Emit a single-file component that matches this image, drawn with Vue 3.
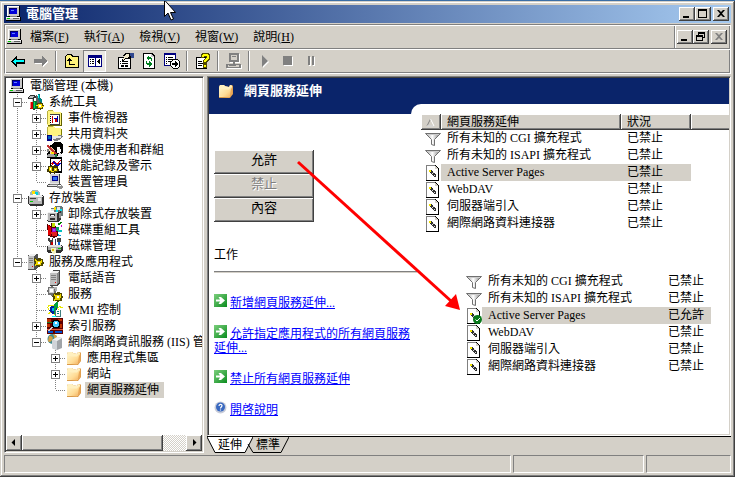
<template>
  <div class="window">
    <header class="titlebar">
      <svg class="icon"><use href="#i-computer" /></svg>
      <h1>電腦管理</h1>
      <div class="controls">
        <button class="ctl" aria-label="最小化"><svg viewBox="0 0 12 10"><path d="M2 7h6v2H2z" /></svg></button>
        <button class="ctl" aria-label="最大化"><svg viewBox="0 0 12 10"><path d="M1 0h9v9H1zM2 2v6h7V2z" fill-rule="evenodd" /></svg></button>
        <button class="ctl close" aria-label="關閉"><svg viewBox="0 0 12 10"><path d="M2 1h2l2 2 2-2h2L7 4.500l3 3.500H8L6 6 4 8H2l3-3.500z" /></svg></button>
      </div>
    </header>

    <div class="bars">
      <nav class="menubar">
        <svg class="icon"><use href="#i-computer" /></svg>
        <button v-for="m in menus" :key="m.key" class="menu">{{ m.text }}(<u>{{ m.key }}</u>)</button>
        <div class="controls child">
          <button class="ctl" aria-label="最小化"><svg viewBox="0 0 12 10"><path d="M2 7h6v2H2z" /></svg></button>
          <button class="ctl" aria-label="還原"><svg viewBox="0 0 12 10"><path d="M3 0h7v6H8V5h1V2H4v1H3zM1 3h7v6H1zM2 5v3h5V5z" fill-rule="evenodd" /></svg></button>
          <button class="ctl close" aria-label="關閉" disabled><svg viewBox="0 0 12 10"><path d="M2 1h2l2 2 2-2h2L7 4.500l3 3.500H8L6 6 4 8H2l3-3.500z" /></svg></button>
        </div>
      </nav>
      <div class="toolbar">
        <template v-for="(t, i) in tools" :key="i">
          <span v-if="!t.icon" class="sep" :class="{ blank: t.blank }"></span>
          <button v-else class="tool" :class="{ pressed: t.pressed }" :aria-label="t.label">
            <svg class="icon"><use :href="'#i-' + t.icon" /></svg>
          </button>
        </template>
      </div>
    </div>

    <main class="main">
      <aside class="tree-pane">
        <ul class="tree">
          <li v-for="n in nodes" :key="n.label" class="node">
            <span v-for="(g, i) in n.guides" :key="i" class="cell">
              <svg class="guide" viewBox="0 0 19 16">
                <path v-if="g === '|' || g === '+'" d="M8.500 0v16" />
                <path v-if="g === 'L'" d="M8.500 0v8" />
                <path v-if="g === '+' || g === 'L'" d="M9 8.500h10" />
              </svg>
              <button v-if="n.box && i === n.guides.length - 1" class="box" :aria-label="n.box === '+' ? '展開' : '摺疊'">
                <svg viewBox="0 0 9 9">
                  <path d="M2 4h5v1H2z" />
                  <path v-if="n.box === '+'" d="M4 2h1v5H4z" />
                </svg>
              </button>
            </span>
            <svg class="icon"><use :href="'#i-' + n.icon" /></svg>
            <span class="label" :class="{ selected: n.selected }">{{ n.label }}</span>
          </li>
        </ul>
        <div class="scrollbar">
          <button class="scroll-btn" aria-label="向左捲動"><svg viewBox="0 0 8 8"><path d="M5 0v7L1.500 3.500z" /></svg></button>
          <div class="track"><div class="thumb"></div></div>
          <button class="scroll-btn" aria-label="向右捲動"><svg viewBox="0 0 8 8"><path d="M3 0v7l3.500-3.500z" /></svg></button>
        </div>
      </aside>

      <section class="detail">
        <div class="view">
          <div class="banner">
            <div class="banner-title">
              <svg class="icon"><use href="#i-folder" /></svg>
              <h2>網頁服務延伸</h2>
            </div>
            <div class="notch"></div>
          </div>
          <div class="body">
            <div class="side">
              <div class="actions">
                <button>允許</button>
                <button disabled>禁止</button>
                <button>內容</button>
              </div>
              <h3>工作</h3>
              <hr />
              <div class="tasks">
                <p v-for="t in tasks" :key="t.text">
                  <svg class="task-icon" viewBox="0 0 13 13"><use :href="'#i-' + t.icon" /></svg><a href="#">{{ t.text }}</a>
                </p>
              </div>
            </div>

            <div class="lists">
              <table class="list">
                <colgroup><col class="c-icon" /><col class="c-name" /><col class="c-state" /><col /></colgroup>
                <thead>
                  <tr>
                    <th class="sort"><svg viewBox="0 0 9 9"><path d="M4.500 1 1 8h7" stroke="#808080" /><path d="M4.500 1 8 8H1" stroke="#fff" /></svg></th>
                    <th>網頁服務延伸</th>
                    <th>狀況</th>
                    <th class="filler"></th>
                  </tr>
                </thead>
                <tbody>
                  <tr v-for="r in before" :key="r.name" :class="{ selected: r.selected }">
                    <td class="pic"><svg class="icon"><use :href="'#i-' + r.icon" /></svg></td>
                    <td>{{ r.name }}</td>
                    <td>{{ r.state }}</td>
                    <td class="rest"></td>
                  </tr>
                </tbody>
              </table>

              <table class="list after">
                <colgroup><col class="c-icon" /><col class="c-name" /><col class="c-state" /></colgroup>
                <tbody>
                  <tr v-for="r in after" :key="r.name" :class="{ selected: r.selected }">
                    <td class="pic"><svg class="icon"><use :href="'#i-' + r.icon" /></svg></td>
                    <td>{{ r.name }}</td>
                    <td>{{ r.state }}</td>
                  </tr>
                </tbody>
              </table>
            </div>

            <svg class="arrow" viewBox="0 0 170 160">
              <path d="M4 8 157 147" stroke="#f00" stroke-width="3" />
              <path d="m166 156-15-4 11-12z" fill="#f00" />
            </svg>
          </div>
        </div>
        <div class="tabs">
          <button class="tab active">
            <svg viewBox="0 0 46 16"><path d="M0 0h46l-8 15H8z" fill="#fff" /><path d="M0 0l8 15.500h30L46 0" fill="none" stroke="#000" /></svg>
            <span>延伸</span>
          </button>
          <button class="tab">
            <svg viewBox="0 0 42 16"><path d="M1 7l5 8.500h28L42 0" fill="none" stroke="#000" /></svg>
            <span>標準</span>
          </button>
        </div>
      </section>
    </main>

    <footer class="status"><span></span><span></span><span></span></footer>

    <svg class="cursor" viewBox="0 0 13 20">
      <path d="M.500-1v16.500l3.500-3.500 3 7 2.500-1-3-6.500h5z" fill="#fff" stroke="#000" />
    </svg>

    <svg class="defs" aria-hidden="true">
      <linearGradient id="g-folder" x1="0" y1="0" x2="1" y2="1">
        <stop offset="0" stop-color="#fff6cc" /><stop offset=".6" stop-color="#ffdc96" /><stop offset="1" stop-color="#f2b060" />
      </linearGradient>
      <linearGradient id="g-funnel">
        <stop offset="0" stop-color="#999" /><stop offset=".45" stop-color="#fff" /><stop offset="1" stop-color="#777" />
      </linearGradient>
      <linearGradient id="g-go" x1="0" y1="0" x2="1" y2="1">
        <stop offset="0" stop-color="#7ccf7c" /><stop offset="1" stop-color="#0a8c1e" />
      </linearGradient>

      <symbol id="i-computer" viewBox="0 0 16 16" shape-rendering="crispEdges">
        <path d="M2 0h12v11H2zM0 11h15v4H0z" fill="#000" />
        <path d="M1 0h12v10H1zM0 11h14v3H0z" fill="#c8c8c8" />
        <path d="M1 0h12v1H2v9H1zM0 11h14v1H0z" fill="#fff" /><path d="M4 10h7v1H4z" fill="#808080" />
        <path d="M3 2h8v6H3z" fill="#0000d8" /><path d="M3 2h8v1H4v5H3z" fill="#000060" />
        <path d="M5 4h3v1H5z" fill="#6080ff" /><path d="M1 12h3v1H1z" fill="#0c0" /><path d="M7 12h6v1H7z" fill="#606060" />
      </symbol>
      <symbol id="i-tools" viewBox="0 0 16 16" shape-rendering="crispEdges">
        <path d="M0 3l2-2h4l2 1v2H6v1l1 3v8H5V7L3 5H0z" fill="#303030" /><path d="M1 3l2-1h3v1L4 4H1zM4 5h1v4H4z" fill="#c0c0c0" />
        <path d="M8 1h1l2 3 1 5H9L8 5z" fill="#606060" /><path d="M10 0h2v4l2 2v3h-2l-2-4z" fill="#008080" /><path d="M10 1h1v3h-1z" fill="#0ff" />
        <path d="M2 8h3v7H2z" fill="#d00000" /><path d="M2 8h1v6H2z" fill="#f88" /><path d="M5 7h4v8H5z" fill="#008030" /><path d="M6 8h1v6H6z" fill="#0d6" />
        <path d="M9 9h2l1-1 1 1h2v2l1 1-1 1v2h-2l-1 1-1-1H9v-2l-1-1 1-1z" fill="#504800" /><path d="M10 10h4v4h-4zM8 11h2v1H8zM14 12h2v1h-2z" fill="#ffe000" /><path d="M11 11h2v2h-2z" fill="#fff" />
      </symbol>
      <symbol id="i-event" viewBox="0 0 16 16" shape-rendering="crispEdges">
        <path d="M1 1h6l1 2h7v13H1z" fill="#606000" /><path d="M0 1l1-1h5l1 2h7v13H0z" fill="#fff480" />
        <path d="M1 0h5v1H1v13H0V1z" fill="#b8b040" /><path d="M3 5h10v9H3z" fill="#fff" /><path d="M3 4h10v1H3zM12 5h1v9h-1zM3 14h10v1H3z" fill="#404040" />
        <path d="M3 6h1v1H3zM3 8h1v1H3zM3 10h1v1H3zM3 12h1v1H3z" fill="#000" /><path d="M5 6h1v7H5zM8 9h2v3H8z" fill="#d00000" /><path d="M7 8h4v1H7zM10 6h1v6h-1z" fill="#00a" />
      </symbol>
      <symbol id="i-share" viewBox="0 0 16 16" shape-rendering="crispEdges">
        <path d="M1 1h6l2 2h6v9H1z" fill="#808000" /><path d="M0 1l1-1h5l2 2h6v9H0z" fill="#fff480" /><path d="M1 0h5v1H1v9H0V1z" fill="#b8b040" />
        <path d="M0 9h5v6H0z" fill="#000080" /><path d="M1 10h3v3H1z" fill="#0060c0" /><path d="M5 10h5l1-1h4l1 2-4 3-2 1H8l-3-2z" fill="#808080" /><path d="M5 10h9v2H9v1H5z" fill="#e8e8e8" />
      </symbol>
      <symbol id="i-users" viewBox="0 0 16 16" shape-rendering="crispEdges">
        <path d="M6 1l2-1h5l3 3v8l-2 1 1 4H0v-5l2-2V4l4-2z" fill="#000" /><path d="M10 5h3l1 4-2 2h-2z" fill="#fff" />
        <path d="M2 5h3l3 4-2 3H3z" fill="#f0d8a8" /><path d="M0 3h2l8 9-1 2L1 6z" fill="#c03030" /><path d="M1 12h5l3 3H0z" fill="#a0a0a0" />
        <path d="M12 11h2l1 4h-5z" fill="#e8e8e8" /><path d="M4 10h3v2H4z" fill="#ffe000" /><path d="M0 7h2v3H0z" fill="#808080" /><path d="M8 12h2v3H8z" fill="#208040" />
      </symbol>
      <symbol id="i-perf" viewBox="0 0 16 16" shape-rendering="crispEdges">
        <path d="M3 0h12v15H3z" fill="#000" /><path d="M4 1h10v12H4z" fill="#fff" /><path d="M4 5h1l2-3 3 4 3-4h1l-4 6-3-3-2 2z" fill="#d00000" />
        <path d="M6 3h1l3 4 3-2h1l-4 4-4-4z" fill="#0000d0" /><path d="M1 8h2l1-1 2 1 2-1 1 1h2v2l1 2-1 2h-2l-1 2-3-1-2 1-1-2H0v-3l1-1z" fill="#403800" />
        <path d="M2 9h3v4H2zM7 10h3v3H7zM4 13h3v1H4z" fill="#f0d800" /><path d="M3 10h1v2H3zM8 11h1v1H8z" fill="#fff" />
      </symbol>
      <symbol id="i-device" viewBox="0 0 16 16" shape-rendering="crispEdges">
        <path d="M4 0h9v10H4z" fill="#404040" /><path d="M3 0h9v9H3z" fill="#d0d0d0" /><path d="M5 2h6v5H5z" fill="#000090" /><path d="M6 3h4v3H6z" fill="#3070f0" />
        <path d="M2 9h11l2 3v1H0v-1z" fill="#505050" /><path d="M2 9h10v1H2zM1 11h12v1H1z" fill="#e8e8e8" /><path d="M3 10h8v1H3z" fill="#808080" /><path d="M10 11h4l2 1v2l-2 1-4-1z" fill="#909090" /><path d="M11 11h3v1h-3z" fill="#fff" />
      </symbol>
      <symbol id="i-storage" viewBox="0 0 16 16" shape-rendering="crispEdges">
        <path d="M3 1l2-1h4l3 3v3H2V3z" fill="#a0b8b8" /><path d="M4 1h3v3H4z" fill="#ffe000" /><path d="M7 2h3v3H7z" fill="#00d0e0" /><path d="M5 4h3v1H5z" fill="#fff" />
        <path d="M1 5h13l2 2v7l-1 2H2l-2-2V6z" fill="#303030" /><path d="M1 5h12l2 2H1z" fill="#f0f0f0" /><path d="M1 7h13v7H1z" fill="#b8b8b8" /><path d="M2 8h6v1H2z" fill="#404040" /><path d="M10 8h3v3h-3z" fill="#e8e8e8" /><path d="M2 11h3v1H2z" fill="#0c0" />
      </symbol>
      <symbol id="i-removable" viewBox="0 0 16 16" shape-rendering="crispEdges">
        <path d="M3 2h3l2-2h6l2 2v8h-4z" fill="#687878" /><path d="M7 1h2v3H7z" fill="#ffe000" /><path d="M9 3h2v3H9zM13 3h2v2h-2z" fill="#00e0f0" /><path d="M10 1h3v3h-3zM4 3h3v2H4z" fill="#e0e8e8" />
        <path d="M1 6h10l3-1v8l-3 3H1l-1-1V7z" fill="#303030" /><path d="M1 6h10v1H1v7H0V7z" fill="#f0f0f0" /><path d="M1 7h9v8H1z" fill="#b8b8b8" /><path d="M3 8h5v2H3zM3 12h5v2H3z" fill="#303030" /><path d="M4 9h3v1H4z" fill="#fff" /><path d="M12 7h2v5h-2z" fill="#909090" />
      </symbol>
      <symbol id="i-defrag" viewBox="0 0 16 16" shape-rendering="crispEdges">
        <path d="M0 2l4 2V1h4v3l3 2v8l-4 2-6-2z" fill="#500000" /><path d="M1 3l3 2v9l-3-1z" fill="#e00000" /><path d="M5 1h3v4H5z" fill="#c0e000" />
        <path d="M5 6h4v4H5z" fill="#b000c0" /><path d="M4 10h6v4H5z" fill="#e02020" /><path d="M9 5h3v4H9z" fill="#00a060" /><path d="M11 1l4-1-3 4z" fill="#008000" /><path d="M13 4l2-2v3z" fill="#c0c" />
        <path d="M11 8h4v2h-4z" fill="#00c0c0" /><path d="M6 7h2v2H6z" fill="#8060ff" /><path d="M11 12l4 2h-4z" fill="#00a0e0" />
      </symbol>
      <symbol id="i-disk" viewBox="0 0 16 16" shape-rendering="crispEdges">
        <path d="M1 0h2v2h2V0h1v4L4 5v3H3V4L1 3zM10 0h4v4h-1v4h-2V4h-1z" fill="#404040" /><path d="M4 4h2v4H4z" fill="#c00000" /><path d="M11 4h2v4h-2z" fill="#0060d0" /><path d="M8 1h1v6H8z" fill="#303060" />
        <path d="M1 7h13l2 2v4l-3 2H1l-1-2V8z" fill="#303030" /><path d="M1 7h12l2 2H1z" fill="#e0e0e0" /><path d="M1 9h13v3H1z" fill="#a8a8a8" /><path d="M11 10h3v1h-3z" fill="#0c0" /><path d="M4 10h5v5l-3 1-2-3z" fill="#f0f0c0" /><path d="M5 11h2v2H5z" fill="#e0c000" />
      </symbol>
      <symbol id="i-apps" viewBox="0 0 16 16" shape-rendering="crispEdges">
        <path d="M0 1l3-1h6l1 1v13l-3 2H0z" fill="#505050" /><path d="M0 2h6v13H0z" fill="#c0c0c0" /><path d="M0 2l3-2h6L6 2z" fill="#f0f0f0" /><path d="M1 4h4v1H1zM1 6h4v1H1zM1 8h4v1H1z" fill="#808080" /><path d="M4 12h1v1H4z" fill="#d00" />
        <path d="M6 4l3 1 1-1h2l1 1h2v2l1 2-1 3h-2l-2 1-2-1H7l-1-1 1-2-1-2z" fill="#504800" /><path d="M7 5l2 2h3l2-1v2l-1 3H9l-2 1 1-3z" fill="#f0d800" /><path d="M10 8h2v2h-2z" fill="#fff" />
      </symbol>
      <symbol id="i-phone" viewBox="0 0 16 16" shape-rendering="crispEdges">
        <path d="M3 3l3-3h7v13l-3 3H3z" fill="#404040" /><path d="M3 3h7v12H3z" fill="#c0c0c0" /><path d="M3 3l3-2h6l-2 2z" fill="#f0f0f0" /><path d="M10 3l2-2v11l-2 3z" fill="#888" />
        <path d="M4 5h5v1H4zM4 7h5v1H4zM4 9h5v1H4z" fill="#808080" /><path d="M8 12h1v1H8z" fill="#e00" />
      </symbol>
      <symbol id="i-gears" viewBox="0 0 16 16" shape-rendering="crispEdges">
        <path d="M1 1h2l1-1h2v1h2v2l1 1v2L8 7v2H6l-1 1-2-1H1V7L0 5l1-2z" fill="#707070" /><path d="M2 2h5v5H2z" fill="#d0d0d0" /><path d="M3 3h3v3H3z" fill="#fff" /><path d="M7 1h3v4H8z" fill="#b0b0b0" />
        <path d="M7 7h2l1-1h3v1h2v2l1 2-1 2v2h-2l-2 1-2-1H6v-3l-1-1 1-2z" fill="#504800" /><path d="M7 8l2 1h3l2-1v2l-1 4h-4l-2 1 1-3z" fill="#f0d800" /><path d="M10 10h2v2h-2z" fill="#fff" />
      </symbol>
      <symbol id="i-wmi" viewBox="0 0 16 16" shape-rendering="crispEdges">
        <ellipse cx="7" cy="8" rx="7" ry="3.500" fill="none" stroke="#e8e800" transform="rotate(35 7 8)" /><path d="M14 4L1 12M2 3h4M13 5h3" fill="none" stroke="#e8e800" />
        <path d="M4 4h4l2 3-1 5H5L2 9z" fill="#0020a0" /><path d="M5 6h2v3H5z" fill="#00b0f0" /><path d="M7 2l3-2h1v6H9v6H7z" fill="#00a040" />
        <path d="M8 8h6v7H8z" fill="#408080" /><path d="M9 8h4v6H9z" fill="#fff" /><path d="M10 9h2v1h-2zM10 11h2v1h-2z" fill="#008080" /><path d="M5 14h4v1H5z" fill="#0ff" />
      </symbol>
      <symbol id="i-index" viewBox="0 0 16 16" shape-rendering="crispEdges">
        <path d="M0 0h16v16H0z" fill="#600000" /><path d="M0 1h4v3H0zM0 6h3v3H0zM11 1h4v2h-4zM13 6h2v4h-2z" fill="#c03000" /><path d="M0 4h5v1H0z" fill="#208020" /><path d="M0 11h16v1H0z" fill="#e06040" /><path d="M1 13h5v2H1zM8 13h7v2H8z" fill="#0050d0" />
        <path d="M6 2h6v1h1v6h-1v1H6V9H5V3h1z" fill="#000" /><path d="M7 3h4v1h1v4h-1v1H7V8H6V4h1z" fill="#40c8ff" /><path d="M8 4h2v2H8z" fill="#fff" /><path d="M4 9h2v1L2 13H0z" fill="#d0d0d0" />
      </symbol>
      <symbol id="i-iis" viewBox="0 0 16 16">
        <circle cx="5.500" cy="5" r="5" fill="#408c90" /><path d="M2 2c3 0 5 1 3 4S2 8 1 7zM6 0l4 2-2 4z" fill="#d8a040" />
        <path d="M5 6l5-3 5 1v10l-5 2-5-2z" fill="#a0a4a8" /><path d="M5 6l5 1v9l-5-2z" fill="#d0d4d8" /><path d="M5 6l5-3 5 1-5 3z" fill="#f0f2f2" />
      </symbol>
      <symbol id="i-folder" viewBox="0 0 16 16">
        <path d="M1 4l1-2h4l1 1 4 1 1-2h2l1 1v8l-3 4H1z" fill="#d89848" /><path d="M1 4l1-2h4l1 1 4 1 1-2 2 .500v8L11.500 14H1z" fill="#fff0c0" />
        <path d="M1 5l5 1.500h5L13 4v7l-2 3.500L1 13.500z" fill="url(#g-folder)" /><path d="M14.500 3v8l-3 3.500L13 6z" fill="#eaa858" />
      </symbol>
      <symbol id="i-funnel" viewBox="0 0 16 16">
        <path d="M.500 2.500h15l-6 6v6l-3-1v-5z" fill="url(#g-funnel)" stroke="#707070" /><path d="M2 3.500h12" stroke="#ccc" />
      </symbol>
      <symbol id="i-ext" viewBox="0 0 16 16" shape-rendering="crispEdges">
        <path d="M1 0h9l4 4v12H1z" fill="#000" /><path d="M1 0h9l3 4v11H1z" fill="#808080" /><path d="M2 1h8v3h3v11H2z" fill="#fff" /><path d="M10 1l3 3h-3z" fill="#d4d0c8" />
        <path d="M4 5h2l5 5v2H9L4 7z" fill="#303030" /><path d="M4 5h2v1H5v1H4z" fill="#f0e000" /><path d="M5 6h1v1H5z" fill="#ff0" /><path d="M7 8h1v1H7zM8 7h1v1H8zM9 10h1v1H9z" fill="#ddd" />
      </symbol>
      <symbol id="i-ext-ok" viewBox="0 0 16 16">
        <use href="#i-ext" width="16" height="16" /><circle cx="11.500" cy="11.500" r="4.500" fill="#0a7a1c" /><path d="M9.500 11.500l1.500 1.500 3-3" fill="none" stroke="#fff" />
      </symbol>
      <symbol id="i-go" viewBox="0 0 13 13">
        <path d="M0 0h13v13H0z" fill="url(#g-go)" /><path d="M2 5.500h4L4.500 3h2.500l4 3.500-4 3.500H4.500L6 7.500H2z" fill="#fff" />
      </symbol>
      <symbol id="i-help" viewBox="0 0 13 13">
        <circle cx="6.500" cy="6.500" r="6" fill="#c8ccd8" /><circle cx="6.500" cy="6" r="4.500" fill="#3868c0" />
        <path d="M5 5c0-2 3-2 3-.500S6.500 6 6.500 7.500M6.500 8.500v1" fill="none" stroke="#fff" stroke-width="1.200" />
      </symbol>

      <symbol id="i-back" viewBox="0 0 16 16" shape-rendering="crispEdges">
        <path d="M6 3h1v3h8v5H7v3H6L1 9V8z" fill="#000" /><path d="M6 5v2h8v2H6v3L2.500 8.500z" fill="#0ff" />
      </symbol>
      <symbol id="i-forward" viewBox="0 0 16 16" shape-rendering="crispEdges">
        <path d="M10 4l5 5-5 5v-3H2V7h8z" fill="#fff" /><path d="M9 3l5 5-5 5v-3H1V6h8z" fill="#808080" />
      </symbol>
      <symbol id="i-up" viewBox="0 0 16 16" shape-rendering="crispEdges">
        <path d="M1 3l2-2h4l2 2h6v12H1z" fill="#000" /><path d="M2 4l1-2h4l1 2h6v10H2z" fill="#fff27a" /><path d="M5 5l3 3H6v3h5v1H5V8H2z" fill="#000" />
      </symbol>
      <symbol id="i-panes" viewBox="0 0 16 16" shape-rendering="crispEdges">
        <path d="M1 2h14v12H1z" fill="#000080" /><path d="M2 5h6v8H2zM9 5h5v8H9z" fill="#fff" /><path d="M3 6h1v1H3zM5 6h2v1H5zM3 8h1v1H3zM5 8h2v1H5zM3 10h1v1H3zM5 10h2v1H5zM13 6v5l-3-2.500z" fill="#000" />
      </symbol>
      <symbol id="i-props" viewBox="0 0 16 16" shape-rendering="crispEdges">
        <path d="M0 4h13v12H0z" fill="#000" /><path d="M1 5h11v10H1z" fill="#fff" /><path d="M2 8h1v1H2zM4 8h6v1H4zM2 10h1v1H2zM4 10h6v1H4zM3 12h3v2H3zM7 12h3v2H7z" fill="#000" />
        <path d="M5 2l3-2h4l1 1v4l-1 1H8L5 8 3 7l3-3z" fill="#000" /><path d="M6 3l2-2h3v3L8 5 5 7z" fill="#f0e8c8" /><path d="M12 0h4v5h-3z" fill="#304890" />
      </symbol>
      <symbol id="i-refresh" viewBox="0 0 16 16" shape-rendering="crispEdges">
        <path d="M2 0h9l3 3v13H2z" fill="#000" /><path d="M3 1h7v3h3v11H3z" fill="#fff" /><path d="M10 1l3 3h-3z" fill="#ccc" />
        <path d="M8 2v2h2v1h1v3h-1V6H8v2L5 5zM8 14v-2H6v-1H5V8h1v2h2V8l3 3z" fill="#008020" />
      </symbol>
      <symbol id="i-export" viewBox="0 0 16 16" shape-rendering="crispEdges">
        <path d="M0 0h12v13H0z" fill="#000080" /><path d="M1 2h10v10H1z" fill="#fff" /><path d="M2 4h1v1H2zM4 4h5v1H4zM2 6h1v1H2zM4 6h5v1H4zM2 8h1v1H2zM4 8h3v1H4zM2 10h1v1H2z" fill="#000" />
        <path d="M9 6h4l3 3v4l-3 3H9l-3-3V9z" fill="#000" /><path d="M9 7h4l2 2v4l-2 2H9l-2-2V9z" fill="#fff" /><path d="M8 10h3V8l4 3-4 3v-2H8z" fill="#000" />
      </symbol>
      <symbol id="i-helpdoc" viewBox="0 0 16 16" shape-rendering="crispEdges">
        <path d="M1 4h11v12H1z" fill="#000" /><path d="M2 5h9v10H2z" fill="#fff" /><path d="M3 8h4v1H3zM3 10h5v1H3zM3 12h4v1H3z" fill="#000" />
        <path d="M6 1l2-1h5l2 2v4l-3 3v2H8V7l3-2V4H9v1H6zM8 11h4v4H8z" fill="#504800" /><path d="M7 2l2-1h3l2 1v3l-3 3v1H9V7l3-2V3H9v1H7zM9 12h2v2H9z" fill="#ff0" />
      </symbol>
      <symbol id="i-net" viewBox="0 0 16 16" shape-rendering="crispEdges">
        <path d="M4 1h10v9H4zM1 12h15v4H1z" fill="#fff" /><path d="M3 0h10v9H3zM5 2v5h6V2zM0 11h7V9h2v2h6v4H0zM2 12v2h11v-2z" fill="#808080" fill-rule="evenodd" />
        <path d="M5 2h6v5H5zM2 12h11v2H2z" fill="#d4d0c8" /><path d="M6 3h4v1H6zM3 12h7v1H3z" fill="#808080" />
      </symbol>
      <symbol id="i-play" viewBox="0 0 16 16"><path d="M6 3v12l6-6z" fill="#fff" /><path d="M5 2v12l6-6z" fill="#808080" /></symbol>
      <symbol id="i-stop" viewBox="0 0 16 16" shape-rendering="crispEdges"><path d="M4 4h9v9H4z" fill="#fff" /><path d="M3 3h9v9H3z" fill="#808080" /></symbol>
      <symbol id="i-pause" viewBox="0 0 16 16" shape-rendering="crispEdges"><path d="M6 4h2v9H6zM10 4h2v9h-2z" fill="#fff" /><path d="M5 3h2v9H5zM9 3h2v9H9z" fill="#808080" /></symbol>
    </svg>
  </div>
</template>

<script setup>
const menus = [
  { text: '檔案', key: 'F' },
  { text: '執行', key: 'A' },
  { text: '檢視', key: 'V' },
  { text: '視窗', key: 'W' },
  { text: '說明', key: 'H' }
];

// entries without an icon are separators
const tools = [
  { icon: 'back', label: '上一步' },
  { icon: 'forward', label: '下一步' },
  {},
  { icon: 'up', label: '上移一層' },
  { icon: 'panes', label: '顯示/隱藏主控台樹', pressed: true },
  { blank: true },
  { icon: 'props', label: '內容' },
  { icon: 'refresh', label: '重新整理' },
  { icon: 'export', label: '匯出清單' },
  {},
  { icon: 'helpdoc', label: '說明' },
  {},
  { icon: 'net', label: '連線' },
  {},
  { icon: 'play', label: '啟動' },
  { icon: 'stop', label: '停止' },
  { icon: 'pause', label: '暫停' }
];

// guides, one char per indent: | passes by, + branch, L last branch, space is empty
const nodes = [
  { guides: '', icon: 'computer', label: '電腦管理 (本機)' },
  { guides: '+', box: '-', icon: 'tools', label: '系統工具' },
  { guides: '|+', box: '+', icon: 'event', label: '事件檢視器' },
  { guides: '|+', box: '+', icon: 'share', label: '共用資料夾' },
  { guides: '|+', box: '+', icon: 'users', label: '本機使用者和群組' },
  { guides: '|+', box: '+', icon: 'perf', label: '效能記錄及警示' },
  { guides: '|L', icon: 'device', label: '裝置管理員' },
  { guides: '+', box: '-', icon: 'storage', label: '存放裝置' },
  { guides: '|+', box: '+', icon: 'removable', label: '卸除式存放裝置' },
  { guides: '|+', icon: 'defrag', label: '磁碟重組工具' },
  { guides: '|L', icon: 'disk', label: '磁碟管理' },
  { guides: 'L', box: '-', icon: 'apps', label: '服務及應用程式' },
  { guides: ' +', box: '+', icon: 'phone', label: '電話語音' },
  { guides: ' +', icon: 'gears', label: '服務' },
  { guides: ' +', icon: 'wmi', label: 'WMI 控制' },
  { guides: ' +', box: '+', icon: 'index', label: '索引服務' },
  { guides: ' L', box: '-', icon: 'iis', label: '網際網路資訊服務 (IIS) 管' },
  { guides: '  +', box: '+', icon: 'folder', label: '應用程式集區' },
  { guides: '  +', box: '+', icon: 'folder', label: '網站' },
  { guides: '  L', icon: 'folder', label: '網頁服務延伸', selected: true }
].map((n) => ({ ...n, guides: n.guides.split('') }));

const tasks = [
  { icon: 'go', text: '新增網頁服務延伸...' },
  { icon: 'go', text: '允許指定應用程式的所有網頁服務延伸...' },
  { icon: 'go', text: '禁止所有網頁服務延伸' },
  { icon: 'help', text: '開啓說明' }
];

const before = [
  { icon: 'funnel', name: '所有未知的 CGI 擴充程式', state: '已禁止' },
  { icon: 'funnel', name: '所有未知的 ISAPI 擴充程式', state: '已禁止' },
  { icon: 'ext', name: 'Active Server Pages', state: '已禁止', selected: true },
  { icon: 'ext', name: 'WebDAV', state: '已禁止' },
  { icon: 'ext', name: '伺服器端引入', state: '已禁止' },
  { icon: 'ext', name: '網際網路資料連接器', state: '已禁止' }
];

const after = before.map((r) => (r.selected ? { ...r, icon: 'ext-ok', state: '已允許' } : r));
</script>

<style>
body {
  margin: 0;
}
</style>

<style scoped>
.window {
  position: relative;
  box-sizing: border-box;
  min-height: 100vh;
  display: flex;
  flex-direction: column;
  padding: 4px;
  overflow: hidden;
  border-top: 1px solid #3a6ea5;
  background: #d4d0c8;
  box-shadow: inset -1px -1px #404040, inset 1px 1px #d4d0c8, inset -2px -2px #808080, inset 2px 2px #fff;
  color: #000;
  font: 12px/16px "Liberation Serif", "Noto Sans CJK TC", serif;
}

button {
  margin: 0;
  padding: 0;
  border: 0;
  background: none;
  color: inherit;
  font: inherit;
}

h1,
h2,
h3 {
  margin: 0;
  font-size: 13px;
}

svg {
  display: block;
  flex: none;
}

.icon {
  width: 16px;
  height: 16px;
}

.defs {
  position: absolute;
  width: 0;
  height: 0;
}

/* title bar and window buttons */
.titlebar {
  display: flex;
  align-items: center;
  gap: 4px;
  height: 18px;
  padding: 0 2px;
  background: linear-gradient(90deg, #0a246a, #a6caf0);
  color: #fff;
}

.controls {
  display: flex;
  margin-left: auto;
}

.ctl {
  width: 16px;
  height: 14px;
  padding: 2px;
}

.ctl svg {
  width: 12px;
  height: 10px;
}

.ctl.close {
  margin-left: 2px;
}

.ctl:disabled {
  fill: #808080;
}

.ctl,
.scroll-btn,
.thumb,
.actions button {
  background: #d4d0c8;
  box-shadow: inset -1px -1px #404040, inset 1px 1px #fff, inset -2px -2px #808080;
}

/* menu and tool bars */
.bars {
  margin: 1px 0 2px;
  border: 1px solid #808080;
  border-right-color: #fff;
  border-bottom-color: #fff;
  box-shadow: inset 1px 1px #fff, inset -1px -1px #808080;
}

.menubar {
  display: flex;
  align-items: center;
  height: 23px;
  padding-left: 2px;
  margin-right: 1px;
  border-bottom: 1px solid #808080;
}

.menu {
  padding: 0 8px 0 7px;
}

.child {
  align-self: stretch;
  align-items: center;
  margin-top: 1px;
  padding: 0 2px;
  border-left: 1px solid #808080;
  box-shadow: inset 1px 0 #fff;
}

.toolbar {
  display: flex;
  align-items: center;
  height: 24px;
  padding-left: 1px;
  box-shadow: inset 1px 1px #fff;
}

.tool {
  display: grid;
  place-items: center;
  width: 23px;
  height: 22px;
}

.tool.pressed {
  background: #eae8e3;
  box-shadow: inset 1px 1px #808080, inset -1px -1px #fff;
}

.sep {
  width: 1px;
  height: 20px;
  margin: 0 3px;
  border-left: 1px solid #808080;
  background: #fff;
}

.sep.blank {
  visibility: hidden;
}

/* console tree */
.main {
  flex: 1;
  display: grid;
  grid-template-columns: 200px minmax(0, 1fr);
  gap: 3px;
}

.tree-pane,
.view {
  border: 1px solid #808080;
  border-right-color: #fff;
  border-bottom-color: #fff;
  box-shadow: inset 1px 1px #404040, inset -1px -1px #d4d0c8;
  background: #fff;
}

.tree-pane {
  display: flex;
  flex-direction: column;
  justify-content: space-between;
  padding: 1px;
  overflow: hidden;
}

.tree {
  margin: 0;
  padding: 0 0 0 3px;
  overflow: hidden;
  list-style: none;
}

.node {
  display: flex;
  height: 16px;
  white-space: nowrap;
}

.cell {
  display: grid;
  flex: none;
  width: 19px;
}

.guide,
.box {
  grid-area: 1 / 1;
}

.guide {
  width: 19px;
  height: 16px;
  fill: none;
  stroke: #808080;
  stroke-dasharray: 1 1;
  shape-rendering: crispEdges;
}

.box {
  width: 9px;
  height: 9px;
  margin: 4px;
  background: #fff;
  box-shadow: inset 0 0 0 1px #808080;
}

.label {
  margin-left: 3px;
  padding: 0 5px 0 2px;
}

.selected {
  background: #d4d0c8;
}

.scrollbar {
  display: flex;
  height: 16px;
}

.scroll-btn {
  display: grid;
  place-items: center;
  width: 16px;
}

.scroll-btn svg {
  width: 8px;
  height: 8px;
}

.track {
  flex: 1;
  background: repeating-conic-gradient(#fff 0 25%, #d4d0c8 0 50%) 0 0 / 2px 2px;
}

.thumb {
  width: 86%;
  height: 16px;
}

/* detail view */
.detail {
  display: flex;
  flex-direction: column;
}

.view {
  flex: 1;
  padding: 1px;
}

.banner {
  background: #0a246a;
  color: #fff;
}

.banner-title {
  display: flex;
  align-items: center;
  gap: 10px;
  height: 26px;
  padding-left: 9px;
}

.notch {
  height: 10px;
  margin-left: 202px;
  border-top-left-radius: 10px;
  background: #fff;
}

.body {
  position: relative;
  display: grid;
  grid-template-columns: 203px minmax(0, 1fr);
  gap: 4px;
  padding-left: 5px;
}

.side {
  padding-top: 36px;
}

.actions {
  display: flex;
  flex-direction: column;
  width: 100px;
  margin-bottom: 25px;
}

.actions button {
  height: 24px;
  padding-bottom: 4px;
  font-size: 13px;
}

.actions button:disabled {
  color: #808080;
  text-shadow: 1px 1px #fff;
}

h3 {
  font-size: 12px;
  font-weight: 400;
}

hr {
  margin: 8px 0 21px;
  border: 0;
  border-top: 1px solid #808080;
  border-bottom: 1px solid #d4d0c8;
}

.tasks {
  display: flex;
  flex-direction: column;
  gap: 15px;
  line-height: 14px;
}

.tasks p {
  margin: 0;
}

.task-icon {
  display: inline-block;
  width: 13px;
  height: 13px;
  margin-right: 3px;
}

.tasks a {
  color: #00f;
}

.list {
  width: 100%;
  table-layout: fixed;
  border-collapse: collapse;
  white-space: nowrap;
}

.c-icon {
  width: 20px;
}

.c-name {
  width: 180px;
}

.c-state {
  width: 70px;
}

.list th {
  height: 16px;
  padding: 0 6px;
  background: #d4d0c8;
  box-shadow: inset -1px -1px #404040, inset 1px 1px #fff, inset -2px -2px #808080;
  font-weight: 400;
  line-height: 15px;
  text-align: left;
}

.list .sort {
  padding: 0 5px;
}

.list .filler {
  box-shadow: inset 0 -1px #404040, inset 1px 1px #fff, inset 0 -2px #808080;
}

.sort svg {
  width: 9px;
  height: 9px;
  fill: none;
}

.list td {
  height: 17px;
  padding: 0 0 0 6px;
  line-height: 15px;
}

.list .pic {
  padding: 0;
  background: #fff;
}

.pic .icon {
  margin-left: auto;
}

.list .rest {
  background: #fff;
}

.after {
  width: 245px;
  margin: 41px 0 0 45px;
}

.after .c-icon {
  width: 16px;
}

.after .c-state {
  width: 49px;
}

.arrow {
  position: absolute;
  left: 85px;
  top: 40px;
  width: 170px;
  height: 160px;
  fill: none;
  pointer-events: none;
}

.tabs {
  display: flex;
  border-top: 1px solid #000;
}

.tab {
  display: grid;
  place-items: center;
  width: 42px;
  margin-left: -6px;
}

.tab svg,
.tab span {
  grid-area: 1 / 1;
}

.tab svg {
  width: 42px;
  height: 16px;
}

.tab.active {
  width: 46px;
  margin: -1px 0 0;
}

.tab.active svg {
  width: 46px;
}

/* status bar */
.status {
  display: grid;
  grid-template-columns: minmax(0, 1fr) 131px 85px;
  gap: 2px;
  height: 18px;
  margin-top: 2px;
}

.status span {
  border: 1px solid #808080;
  border-right-color: #fff;
  border-bottom-color: #fff;
}

.cursor {
  position: absolute;
  left: 164px;
  top: 0;
  width: 13px;
  height: 20px;
}
</style>
